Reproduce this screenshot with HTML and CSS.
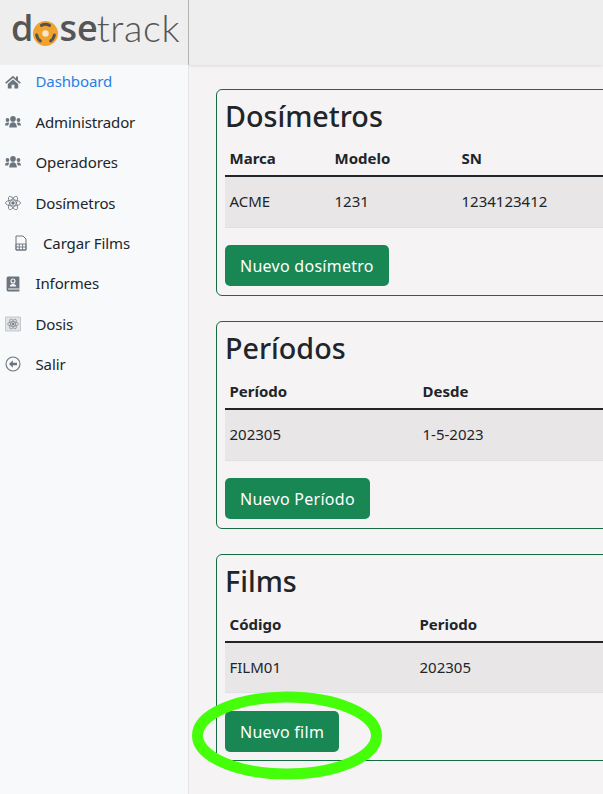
FILE: index.html
```html
<!DOCTYPE html>
<html lang="es">
<head>
    <meta charset="UTF-8">
    <meta name="viewport" content="width=device-width, initial-scale=1.0">
    <title>Dosetrack</title>
    <link rel="stylesheet" href="styles.css">
</head>
<body>

    <header class="topbar">
        <div class="logo">
            <span class="logo-bold">d</span>
            <svg class="logo-icon" viewBox="0 0 25 25" width="25" height="25">
                <circle cx="12.5" cy="12.5" r="12.5" fill="#f0a22e"/>
                <g fill="none" stroke="#55524f" stroke-width="3" stroke-linecap="round">
                    <path d="M8.4 4.4 A9 9 0 0 1 16.6 4.4"/>
                    <path d="M3.6 13.9 A9 9 0 0 0 7.4 20"/>
                    <path d="M21.4 13.9 A9 9 0 0 1 17.6 20"/>
                </g>
                <circle cx="12.5" cy="12.5" r="3.2" fill="#f7e6cc"/>
            </svg>
            <span class="logo-bold">se</span><span class="logo-thin">track</span>
        </div>
    </header>

    <div class="layout">
        <nav class="sidebar">
            <a class="nav-item active" href="#">
                <svg class="nav-icon" viewBox="0 0 16 16"><path d="M8 1.8 L0.2 8.6 L1.3 9.8 L8 4 L14.7 9.8 L15.8 8.6 L13 6.2 V2.4 H11 V4.4 Z M2.8 10 V14.6 H6.6 V10.8 H9.4 V14.6 H13.2 V10 L8 5.5 Z" fill="#6c757d"/></svg>
                Dashboard
            </a>
            <a class="nav-item" href="#">
                <svg class="nav-icon" viewBox="0 0 16 16"><g fill="#6c757d"><circle cx="8" cy="4.9" r="2.8"/><circle cx="2.5" cy="6" r="1.9"/><circle cx="13.5" cy="6" r="1.9"/><path d="M4.2 13.6 C4.2 10 5.8 8.3 8 8.3 C10.2 8.3 11.8 10 11.8 13.6 Z"/><path d="M0 11.6 C0 9.4 1 8.4 2.6 8.4 C3.3 8.4 3.8 8.5 4.3 8.9 C3.6 9.7 3.3 10.6 3.2 11.6 Z"/><path d="M16 11.6 C16 9.4 15 8.4 13.4 8.4 C12.7 8.4 12.2 8.5 11.7 8.9 C12.4 9.7 12.7 10.6 12.8 11.6 Z"/></g></svg>
                Administrador
            </a>
            <a class="nav-item" href="#">
                <svg class="nav-icon" viewBox="0 0 16 16"><g fill="#6c757d"><circle cx="8" cy="4.9" r="2.8"/><circle cx="2.5" cy="6" r="1.9"/><circle cx="13.5" cy="6" r="1.9"/><path d="M4.2 13.6 C4.2 10 5.8 8.3 8 8.3 C10.2 8.3 11.8 10 11.8 13.6 Z"/><path d="M0 11.6 C0 9.4 1 8.4 2.6 8.4 C3.3 8.4 3.8 8.5 4.3 8.9 C3.6 9.7 3.3 10.6 3.2 11.6 Z"/><path d="M16 11.6 C16 9.4 15 8.4 13.4 8.4 C12.7 8.4 12.2 8.5 11.7 8.9 C12.4 9.7 12.7 10.6 12.8 11.6 Z"/></g></svg>
                Operadores
            </a>
            <a class="nav-item" href="#">
                <svg class="nav-icon" viewBox="0 0 16 16"><g fill="none" stroke="#6c757d" stroke-width="0.8"><ellipse cx="8" cy="8" rx="7.5" ry="3"/><ellipse cx="8" cy="8" rx="7.5" ry="3" transform="rotate(60 8 8)"/><ellipse cx="8" cy="8" rx="7.5" ry="3" transform="rotate(120 8 8)"/></g><circle cx="8" cy="8" r="1.7" fill="#6c757d"/></svg>
                Dosímetros
            </a>
            <a class="nav-item sub" href="#">
                <svg class="nav-icon small" viewBox="0 0 12 16"><path d="M1 1 H8 L11 4 V15 H1 Z" fill="none" stroke="#6c757d" stroke-width="1"/><path d="M1 9 H11 V15 H1 Z M4.3 9 V15 M7.6 9 V15 M1 12 H11" fill="none" stroke="#6c757d" stroke-width="0.9"/></svg>
                Cargar Films
            </a>
            <a class="nav-item" href="#">
                <svg class="nav-icon" viewBox="0 0 16 16"><path d="M3 0.6 H13.6 A0.8 0.8 0 0 1 14.4 1.4 V15.4 H3 A1.5 1.5 0 0 1 1.6 14 V2 A1.5 1.5 0 0 1 3 0.6 Z" fill="#6c757d"/><circle cx="8" cy="5" r="2" fill="none" stroke="#f8f9fb" stroke-width="1.1"/><path d="M4.6 10.6 C5 8.7 6.4 8 8 8 C9.6 8 11 8.7 11.4 10.6 Z M3.2 12.6 H14.4 V13.4 H3.2 Z" fill="#f8f9fb"/></svg>
                Informes
            </a>
            <a class="nav-item" href="#">
                <svg class="nav-icon" viewBox="0 0 16 16"><path d="M0.5 1 H15.5 V15 H0.5 Z" fill="#e2e3e6" stroke="#bcbec2" stroke-width="0.8"/><g fill="none" stroke="#7c838a" stroke-width="0.7"><ellipse cx="8" cy="8" rx="5.4" ry="2.2"/><ellipse cx="8" cy="8" rx="5.4" ry="2.2" transform="rotate(60 8 8)"/><ellipse cx="8" cy="8" rx="5.4" ry="2.2" transform="rotate(120 8 8)"/></g><circle cx="8" cy="8" r="1.2" fill="#7c838a"/></svg>
                Dosis
            </a>
            <a class="nav-item" href="#">
                <svg class="nav-icon" viewBox="0 0 16 16"><circle cx="8" cy="8" r="7" fill="none" stroke="#6c757d" stroke-width="1.1"/><path d="M7.8 4.2 L4 8 L7.8 11.8 V9.3 H12 V6.7 H7.8 Z" fill="#6c757d"/></svg>
                Salir
            </a>
        </nav>

        <main class="content">
            <section class="card">
                <h2>Dosímetros</h2>
                <table class="table">
                    <thead>
                        <tr><th class="col-marca">Marca</th><th class="col-modelo">Modelo</th><th>SN</th></tr>
                    </thead>
                    <tbody>
                        <tr><td>ACME</td><td>1231</td><td>1234123412</td></tr>
                    </tbody>
                </table>
                <button class="btn">Nuevo dosímetro</button>
            </section>

            <section class="card">
                <h2>Períodos</h2>
                <table class="table">
                    <thead>
                        <tr><th class="col-periodo">Período</th><th>Desde</th></tr>
                    </thead>
                    <tbody>
                        <tr><td>202305</td><td>1-5-2023</td></tr>
                    </tbody>
                </table>
                <button class="btn">Nuevo Período</button>
            </section>

            <section class="card">
                <h2>Films</h2>
                <table class="table">
                    <thead>
                        <tr><th class="col-codigo">Código</th><th>Periodo</th></tr>
                    </thead>
                    <tbody>
                        <tr><td>FILM01</td><td>202305</td></tr>
                    </tbody>
                </table>
                <button class="btn">Nuevo film</button>
            </section>
        </main>
    </div>

    <svg class="highlight" width="200" height="96" viewBox="0 0 200 96">
        <ellipse cx="101" cy="47.5" rx="89.5" ry="38.5" fill="none" stroke="#45ff0a" stroke-width="11"/>
    </svg>

</body>
</html>
```

FILE: styles.css
```css
html, body {
    margin: 0;
    height: 794px;
    overflow: hidden;
}

body {
    position: relative;
    font-family: "Noto Sans", "Open Sans", sans-serif;
    font-size: 15px;
    line-height: 1.5;
    color: #212529;
    background-color: #f5f3f4;
}

.topbar {
    height: 65px;
    background-color: #eeeeee;
    box-shadow: 0 1px 3px rgba(0, 0, 0, 0.1);
}

.logo {
    width: 189px;
    height: 65px;
    box-sizing: border-box;
    padding: 0 0 10px 11px;
    display: flex;
    align-items: center;
    border-right: 1px solid #b4b4b4;
    font-family: "Open Sans", sans-serif;
    font-size: 36px;
    color: #555555;
}

.logo-bold {
    font-weight: 600;
}

.logo-thin {
    margin-left: -1px;
    font-family: "Lato", sans-serif;
    font-weight: 300;
    font-size: 38px;
    letter-spacing: 0.6px;
}

.logo-icon {
    margin: 12px 1px 0 0;
}

.layout {
    display: flex;
    height: 729px;
}

.sidebar {
    width: 189px;
    box-sizing: border-box;
    flex-shrink: 0;
    background-color: #f8f9fb;
    border-right: 1px solid #e5e5e5;
}

.nav-item {
    display: flex;
    align-items: center;
    height: 40.4px;
    padding-left: 5px;
    color: #212529;
    letter-spacing: -0.12px;
    text-decoration: none;
}

.nav-item:first-child {
    margin-top: -3.5px;
}

.nav-item.active {
    color: #2780e3;
}

.nav-item.sub {
    padding-left: 15px;
}

.nav-icon {
    width: 16px;
    height: 16px;
    margin-right: 14.5px;
    flex-shrink: 0;
}

.nav-icon.small {
    width: 12px;
    margin-right: 16px;
}

.content {
    padding: 23.6px 0 0 27px;
    flex: 1;
    min-width: 0;
}

.card {
    width: 480px;
    height: 207.2px;
    box-sizing: border-box;
    margin-bottom: 25.6px;
    padding: 8px;
    border: 1px solid #146c43;
    border-radius: 6px;
}

.card h2 {
    margin: 0 0 6.4px;
    font-size: 28.7px;
    font-weight: 500;
    line-height: 36.4px;
}

.table {
    width: 100%;
    margin-bottom: 17.6px;
    border-collapse: collapse;
    table-layout: fixed;
}

.table th {
    height: 36px;
    padding: 1px 5.5px 0 4.5px;
    box-sizing: border-box;
    text-align: left;
    font-weight: 700;
    border-bottom: 2px solid #212529;
}

.table td {
    height: 51px;
    padding: 0 5.5px 1px 4.5px;
    box-sizing: border-box;
    background-color: #e8e6e7;
    border-bottom: 1px solid #dee2e6;
}

.col-marca { width: 105px; }
.col-modelo { width: 127px; }
.col-periodo { width: 193px; }
.col-codigo { width: 190px; }

.btn {
    height: 41px;
    padding: 1px 15px 0;
    font-family: inherit;
    font-size: 16px;
    letter-spacing: 0.27px;
    color: white;
    background-color: #198754;
    border: none;
    border-radius: 5px;
    cursor: pointer;
}

.highlight {
    position: absolute;
    left: 186px;
    top: 688px;
}
```
